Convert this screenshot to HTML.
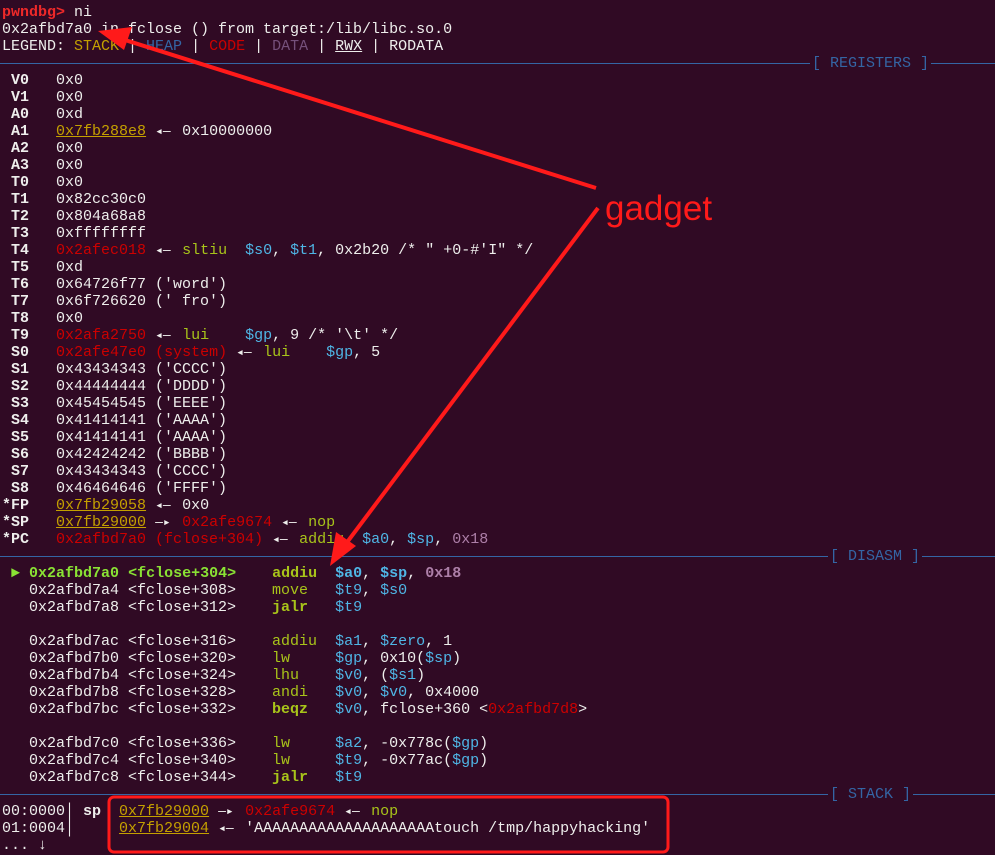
<!DOCTYPE html>
<html><head><meta charset="utf-8"><style>
html,body{margin:0;padding:0;background:#300a24;width:995px;height:855px;overflow:hidden}
#t{position:absolute;left:2px;top:4px;width:993px;font-family:"Liberation Mono","DejaVu Sans Mono",monospace;font-size:15px;line-height:17px;color:#eeeeec;white-space:pre}
.l{height:17px}
.r{color:#cc0000}.y{color:#c4a000;text-decoration:underline}.b{color:#3465a4}.p{color:#75507b}
.g{color:#a8c41a}.c{color:#4fb6e6}.v{color:#ad7fa8;font-weight:bold}
.B{font-weight:bold}.G{color:#8ae234;font-weight:bold}
.a{display:inline-block;width:18px;font-family:"DejaVu Sans Mono",monospace;font-size:13px}
.sep{position:relative;height:17px}
.sep:before{content:"";position:absolute;left:-2px;right:0;top:8px;border-top:1px solid #3465a4}
.sep span{position:absolute;top:0;background:#300a24;color:#3465a4;padding:0 2px}
.pr{color:#ef2929;font-weight:bold}
</style></head><body>
<div id="t"><div class="l"><span class="pr">pwndbg&gt;</span> ni</div><div class="l">0x2afbd7a0 in fclose () from target:/lib/libc.so.0</div><div class="l">LEGEND: <span style="color:#c4a000">STACK</span> | <span class="b">HEAP</span> | <span class="r">CODE</span> | <span class="p">DATA</span> | <u>RWX</u> | RODATA</div><div class="sep"><span style="left:808px">[ REGISTERS ]</span></div><div class="l"> <b>V0</b>   0x0</div><div class="l"> <b>V1</b>   0x0</div><div class="l"> <b>A0</b>   0xd</div><div class="l"> <b>A1</b>   <span class="y">0x7fb288e8</span> <span class="a">◂—</span> 0x10000000</div><div class="l"> <b>A2</b>   0x0</div><div class="l"> <b>A3</b>   0x0</div><div class="l"> <b>T0</b>   0x0</div><div class="l"> <b>T1</b>   0x82cc30c0</div><div class="l"> <b>T2</b>   0x804a68a8</div><div class="l"> <b>T3</b>   0xffffffff</div><div class="l"> <b>T4</b>   <span class="r">0x2afec018</span> <span class="a">◂—</span> <span class="g">sltiu</span>  <span class="c">$s0</span>, <span class="c">$t1</span>, 0x2b20 /* " +0-#'I" */</div><div class="l"> <b>T5</b>   0xd</div><div class="l"> <b>T6</b>   0x64726f77 ('word')</div><div class="l"> <b>T7</b>   0x6f726620 (' fro')</div><div class="l"> <b>T8</b>   0x0</div><div class="l"> <b>T9</b>   <span class="r">0x2afa2750</span> <span class="a">◂—</span> <span class="g">lui</span>    <span class="c">$gp</span>, 9 /* '\t' */</div><div class="l"> <b>S0</b>   <span class="r">0x2afe47e0 (system)</span> <span class="a">◂—</span> <span class="g">lui</span>    <span class="c">$gp</span>, 5</div><div class="l"> <b>S1</b>   0x43434343 ('CCCC')</div><div class="l"> <b>S2</b>   0x44444444 ('DDDD')</div><div class="l"> <b>S3</b>   0x45454545 ('EEEE')</div><div class="l"> <b>S4</b>   0x41414141 ('AAAA')</div><div class="l"> <b>S5</b>   0x41414141 ('AAAA')</div><div class="l"> <b>S6</b>   0x42424242 ('BBBB')</div><div class="l"> <b>S7</b>   0x43434343 ('CCCC')</div><div class="l"> <b>S8</b>   0x46464646 ('FFFF')</div><div class="l"><b>*FP</b>   <span class="y">0x7fb29058</span> <span class="a">◂—</span> 0x0</div><div class="l"><b>*SP</b>   <span class="y">0x7fb29000</span> <span class="a">—▸</span> <span class="r">0x2afe9674</span> <span class="a">◂—</span> <span class="g">nop</span></div><div class="l"><b>*PC</b>   <span class="r">0x2afbd7a0 (fclose+304)</span> <span class="a">◂—</span> <span class="g">addiu</span>  <span class="c">$a0</span>, <span class="c">$sp</span>, <span class="v" style="font-weight:normal">0x18</span></div><div class="sep"><span style="left:826px">[ DISASM ]</span></div><div class="l"> <span class="G">►</span> <span class="G">0x2afbd7a0 &lt;fclose+304&gt;</span>    <span class="g B">addiu</span>  <span class="c B">$a0</span>, <span class="c B">$sp</span>, <span class="v">0x18</span></div><div class="l">   0x2afbd7a4 &lt;fclose+308&gt;    <span class="g">move</span>   <span class="c">$t9</span>, <span class="c">$s0</span></div><div class="l">   0x2afbd7a8 &lt;fclose+312&gt;    <span class="g B">jalr</span>   <span class="c">$t9</span></div><div class="l"> </div><div class="l">   0x2afbd7ac &lt;fclose+316&gt;    <span class="g">addiu</span>  <span class="c">$a1</span>, <span class="c">$zero</span>, 1</div><div class="l">   0x2afbd7b0 &lt;fclose+320&gt;    <span class="g">lw</span>     <span class="c">$gp</span>, 0x10(<span class="c">$sp</span>)</div><div class="l">   0x2afbd7b4 &lt;fclose+324&gt;    <span class="g">lhu</span>    <span class="c">$v0</span>, (<span class="c">$s1</span>)</div><div class="l">   0x2afbd7b8 &lt;fclose+328&gt;    <span class="g">andi</span>   <span class="c">$v0</span>, <span class="c">$v0</span>, 0x4000</div><div class="l">   0x2afbd7bc &lt;fclose+332&gt;    <span class="g B">beqz</span>   <span class="c">$v0</span>, fclose+360 &lt;<span class="r">0x2afbd7d8</span>&gt;</div><div class="l"> </div><div class="l">   0x2afbd7c0 &lt;fclose+336&gt;    <span class="g">lw</span>     <span class="c">$a2</span>, -0x778c(<span class="c">$gp</span>)</div><div class="l">   0x2afbd7c4 &lt;fclose+340&gt;    <span class="g">lw</span>     <span class="c">$t9</span>, -0x77ac(<span class="c">$gp</span>)</div><div class="l">   0x2afbd7c8 &lt;fclose+344&gt;    <span class="g B">jalr</span>   <span class="c">$t9</span></div><div class="sep"><span style="left:826px">[ STACK ]</span></div><div class="l">00:0000│ <b>sp</b>  <span class="y">0x7fb29000</span> <span class="a">—▸</span> <span class="r">0x2afe9674</span> <span class="a">◂—</span> <span class="g">nop</span></div><div class="l">01:0004│     <span class="y">0x7fb29004</span> <span class="a">◂—</span> 'AAAAAAAAAAAAAAAAAAAAtouch /tmp/happyhacking'</div><div class="l">... ↓</div></div>
<svg width="995" height="855" style="position:absolute;left:0;top:0" xmlns="http://www.w3.org/2000/svg">
<g stroke="#ff1a1a" stroke-width="4" fill="#ff1a1a">
<line x1="596" y1="188" x2="125" y2="40"/>
<polygon points="98,31 132,27 124,50" stroke="none"/>
<line x1="598" y1="208" x2="345" y2="545"/>
<polygon points="330,566 336,532 356,546" stroke="none"/>
</g>
<rect x="109" y="797" width="559" height="55" rx="5" fill="none" stroke="#ff1a1a" stroke-width="3"/>
<text x="605" y="220" font-family="Liberation Sans, sans-serif" font-size="35" fill="#ff1a1a">gadget</text>
</svg>
</body></html>
